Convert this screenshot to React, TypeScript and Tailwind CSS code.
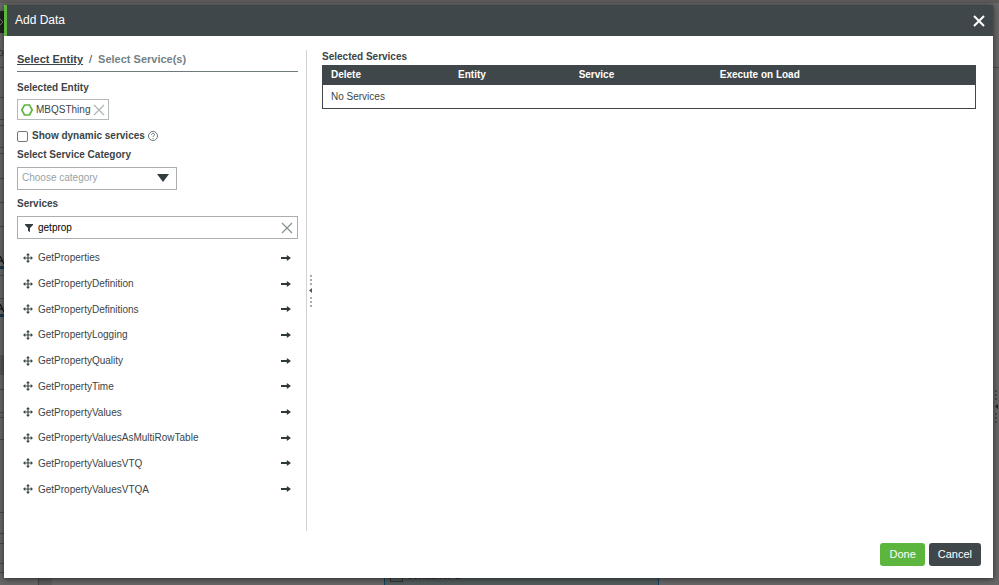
import React, { useState } from 'react';
import { clsx } from 'clsx';

const SERVICES = [
    'GetProperties',
    'GetPropertyDefinition',
    'GetPropertyDefinitions',
    'GetPropertyLogging',
    'GetPropertyQuality',
    'GetPropertyTime',
    'GetPropertyValues',
    'GetPropertyValuesAsMultiRowTable',
    'GetPropertyValuesVTQ',
    'GetPropertyValuesVTQA',
];

// Vertical positions of the panel borders behind the dialog
const BACKDROP_LINES = [67, 97, 119, 125, 147, 153, 178, 202, 226, 275, 298, 389, 412, 417, 439, 512, 533, 543, 563, 572];

const CloseIcon: React.FC<{ className?: string; weight?: number }> = ({ className, weight = 1.3 }) => (
    <svg viewBox="0 0 12 12" className={className} fill="none" stroke="currentColor" strokeWidth={weight}>
        <path d="M1 1l10 10M11 1L1 11" />
    </svg>
);

const MoveIcon = () => (
    <svg viewBox="0 0 10 10" className="size-[10px] text-[#3e4649]">
        <path d="M5 1v8M1 5h8" stroke="currentColor" strokeWidth="1.2" />
        <path d="M5 0l2 2.300H3zM5 10l2-2.300H3zM0 5l2.300-2v4zM10 5L7.700 3v4z" fill="currentColor" />
    </svg>
);

const ArrowIcon = () => (
    <svg viewBox="0 0 10 6" className="h-[6px] w-[10px] text-[#2f383b]" fill="currentColor">
        <path d="M0 1.900h5.800V0L10 3 5.800 6V4.100H0z" />
    </svg>
);

const Backdrop = () => (
    <div className="absolute inset-0 overflow-hidden bg-[#676767]" aria-hidden="true">
        <div className="absolute inset-x-0 top-0 h-[3px] bg-[#5c5b5a]" />
        <svg className="absolute left-0 top-0 h-[585px] w-[4px]">
            <rect y="11" width="4" height="22" fill="#222" />
            <path d="M0 19l3 3-3 3" stroke="#777" fill="none" />
            <path d="M0 50a3 3 0 0 1 0 6" stroke="#333" fill="none" />
            {BACKDROP_LINES.map(y => (
                <rect key={y} y={y} width="4" height="1" fill="#484848" />
            ))}
            <path d="M0 256l4 8M0 261h3M0 304l4 8M0 309h3" stroke="#1c1c1c" strokeWidth="1.500" />
            <path d="M0 266h4v3H0zM0 314h4v3H0z" fill="#16394a" />
            <rect y="355" width="4" height="20" fill="#555" />
        </svg>
        <div className="absolute right-0 top-[67px] h-px w-[6px] bg-[#4d4d4d]" />
        <svg viewBox="0 0 6 34" className="absolute right-0 top-[390px] h-[34px] w-[6px]">
            <path d="M3 0v10M3 23v11" stroke="#484848" strokeWidth="2" strokeDasharray="2 2" />
            <path d="M5 14l-3 2.500 3 2.500z" fill="#222" />
        </svg>
        <div className="absolute bottom-0 left-[38px] h-[7px] w-[14px] border-l border-[#444] bg-[#5c5c5c]" />
        <div className="absolute bottom-0 left-[384px] h-[7px] w-[275px] border-x border-[#12435c] bg-[#535c5c]">
            <div className="absolute bottom-[3px] left-[5px] h-[9px] w-[13px] border border-[#333]" />
            <span className="absolute bottom-[3px] left-[22px] font-bold leading-3 text-[#333]">container-2</span>
        </div>
    </div>
);

const FieldLabel: React.FC<{ htmlFor?: string; children: React.ReactNode }> = ({ htmlFor, children }) => (
    <label htmlFor={htmlFor} className="block font-bold leading-3">{children}</label>
);

const EntityPanel = () => {
    const [filter, setFilter] = useState('getprop');
    const [hasEntity, setHasEntity] = useState(true);

    const visible = SERVICES.filter(name => name.toLowerCase().includes(filter.toLowerCase()));

    return (
        <section className="w-[281px] shrink-0">
            <nav className="flex gap-1.5 border-b border-[#6d7b7c] pt-[2px] pb-[5px] text-[11px] font-bold leading-[14px]">
                <a href="#entity" className="underline underline-offset-1">Select Entity</a>
                <span className="font-normal">/</span>
                <a href="#services" className="text-[#738284]">Select Service(s)</a>
            </nav>

            <div className="mt-[10px]">
                <FieldLabel>Selected Entity</FieldLabel>
                <div className="mt-[5px] h-[21px]">
                    {hasEntity && (
                        <div className="inline-flex h-full items-center gap-[3px] border border-[#b4babb] px-[3px]">
                            <svg viewBox="0 0 12 12" className="size-3" fill="none" stroke="#5cb53c" strokeWidth="1.700">
                                <path d="M3.500 1h5L11.200 6l-2.700 5h-5L.8 6z" />
                            </svg>
                            <span>MBQSThing</span>
                            <button aria-label="Remove entity" onClick={() => setHasEntity(false)}>
                                <CloseIcon className="size-3 text-[#b0b5b6]" />
                            </button>
                        </div>
                    )}
                </div>
            </div>

            <div className="mt-[10px] flex items-center leading-3">
                <input
                    id="dynamic"
                    type="checkbox"
                    className="size-[11px] appearance-none rounded-xs border border-[#777] checked:bg-[#5cb53c]"
                />
                <label htmlFor="dynamic" className="ml-1 font-bold">Show dynamic services</label>
                <svg viewBox="0 0 10 10" className="ml-[3px] size-[10px]" fill="none" stroke="#4a5457" strokeWidth="0.8">
                    <circle cx="5" cy="5" r="4.500" />
                    <path d="M3.500 4c0-2 3-2 3-.2C6.500 4.900 5 4.800 5 6M5 7v.9" />
                </svg>
            </div>

            <div className="mt-[7px]">
                <FieldLabel htmlFor="category">Select Service Category</FieldLabel>
                <div className="relative mt-[6px] w-40">
                    <select id="category" defaultValue="" className="h-[23px] w-full appearance-none border border-[#a9afb0] px-1 pb-[2px] text-[#98a3a5]">
                        <option value="">Choose category</option>
                        <option value="property">Property</option>
                    </select>
                    <svg viewBox="0 0 12 8" className="pointer-events-none absolute right-2 top-[7px] h-2 w-3">
                        <path d="M0 0h12L6 8z" fill="#333c3f" />
                    </svg>
                </div>
            </div>

            <div className="mt-2">
                <FieldLabel htmlFor="filter">Services</FieldLabel>
                <div className="mt-[6px] flex h-[23px] items-center border border-[#a9afb0] pl-[7px] pr-1">
                    <svg viewBox="0 0 8 8" className="size-2 shrink-0">
                        <path d="M0 0h8v1L5 4v4L3 7V4L0 1z" fill="#333c3f" />
                    </svg>
                    <input
                        id="filter"
                        value={filter}
                        onChange={e => setFilter(e.target.value)}
                        className="ml-[5px] min-w-0 flex-1 text-black outline-none"
                    />
                    <button aria-label="Clear filter" onClick={() => setFilter('')}>
                        <CloseIcon className="size-3 text-[#8b9293]" />
                    </button>
                </div>
            </div>

            <ul className="mt-[6px] grid h-[257px] grid-rows-10">
                {visible.map(name => (
                    <li key={name} className="flex items-center pl-[6px] pr-[7px]">
                        <MoveIcon />
                        <span className="ml-[5px] flex-1">{name}</span>
                        <button aria-label={`Add ${name}`}>
                            <ArrowIcon />
                        </button>
                    </li>
                ))}
            </ul>
        </section>
    );
};

const SelectedServices = () => (
    <section className="min-w-0 flex-1">
        <table className="w-full table-fixed border-collapse border border-[#3f474a] text-left">
            <caption className="pb-[2px] text-left font-bold leading-[13px]">Selected Services</caption>
            <thead className="bg-[#3f474a] text-white">
                <tr className="h-[19px]">
                    <th className="w-[20%] pb-[2px] pl-2 font-bold">Delete</th>
                    <th className="w-[18%] pb-[2px] pl-[5px] font-bold">Entity</th>
                    <th className="w-[21%] pb-[2px] pl-2 font-bold">Service</th>
                    <th className="pb-[2px] pl-3 font-bold">Execute on Load</th>
                </tr>
            </thead>
            <tbody>
                <tr className="h-[24px]">
                    <td colSpan={4} className="pl-2">No Services</td>
                </tr>
            </tbody>
        </table>
    </section>
);

const App: React.FC = () => {
    const buttonBase = 'h-[23px] rounded-[3px] px-[9px] text-[11px] text-white';

    return (
        <div className="relative flex min-h-screen flex-col pt-[5px] pr-[6px] pb-[7px] pl-[4px] font-['Liberation_Sans',Arial,sans-serif] text-[10px] text-[#3b4447]">
            <Backdrop />

            <div role="dialog" aria-label="Add Data" className="relative flex flex-1 flex-col bg-white shadow-[0_1px_6px_rgba(0,0,0,0.6)]">
                <header className="flex h-[31px] items-center justify-between border-l-[3px] border-[#5cb53c] bg-[#3f474a] px-2 text-white">
                    <h1 className="pb-[2px] text-xs">Add Data</h1>
                    <button aria-label="Close">
                        <CloseIcon className="size-3" weight={2} />
                    </button>
                </header>

                <main className="flex flex-1 pt-[14px] pr-[17px] pl-[13px]">
                    <EntityPanel />
                    <div className="ml-2 w-px bg-[#d0d3d3]" />
                    <div className="flex w-[15px] shrink-0 items-center pl-px">
                        <svg viewBox="0 0 6 34" className="h-[34px] w-[6px]">
                            <path d="M3 1v10M3 23v10" stroke="#aaa" strokeWidth="2" strokeDasharray="2 2" />
                            <path d="M4 14L1 16.500 4 19z" fill="#555" />
                        </svg>
                    </div>
                    <SelectedServices />
                </main>

                <footer className="mt-3 flex justify-end gap-1 pr-3 pb-3">
                    <button className={clsx(buttonBase, 'bg-[#5cb53c]')}>Done</button>
                    <button className={clsx(buttonBase, 'bg-[#3f474a]')}>Cancel</button>
                </footer>
            </div>
        </div>
    );
};

export default App;
